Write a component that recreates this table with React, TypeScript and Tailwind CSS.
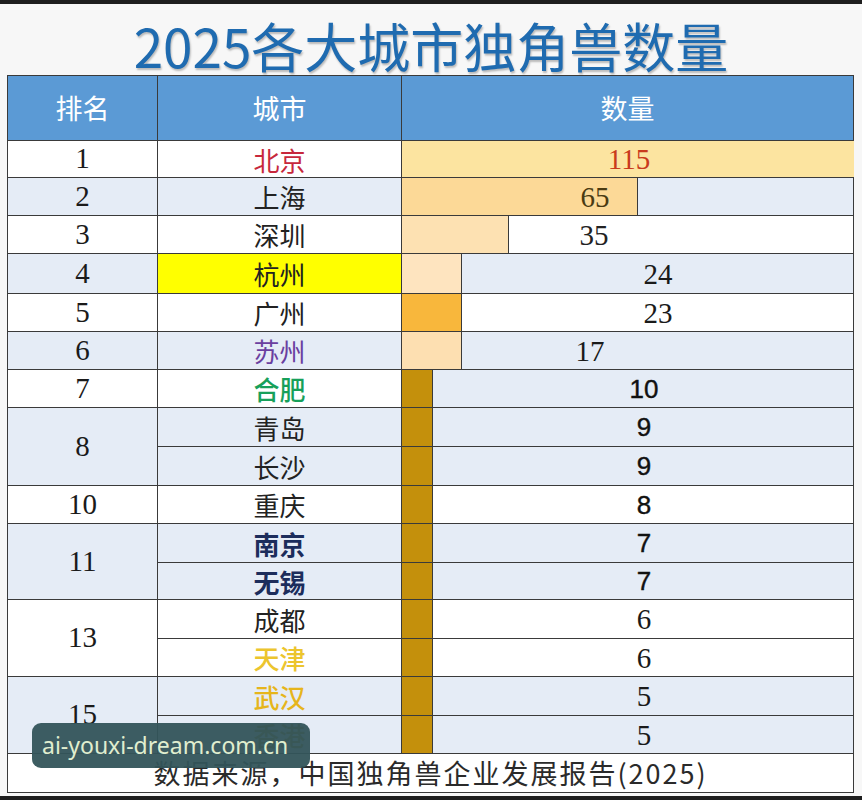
import type { ReactNode } from 'react';

type Row = {
  rank?: string;
  rankSpan?: 1 | 2;
  rankBg?: string;
  city: string;
  cityClass: string;
  cityBg: string;
  value: number;
  valueClass: string;
  valueBg: string;
  bar: string;
  barW: number;
  textX: number;
  h: number;
};

const W = 'bg-white';
const B = 'bg-[#e5ecf6]';
const serif = "font-['Liberation_Serif',serif] text-[29px]";
const sans = "font-['Liberation_Sans',sans-serif] text-[26px] [-webkit-text-stroke:0.4px_#111]";

const rows: Row[] = [
  { rank: '1', rankBg: W, city: '北京', cityClass: 'text-[#c7283c]', cityBg: W, value: 115, valueClass: `${serif} text-[#c93a1c]`, valueBg: W, bar: 'bg-[#fce4a0]', barW: 452, textX: 227, h: 37 },
  { rank: '2', rankBg: B, city: '上海', cityClass: 'text-[#222]', cityBg: B, value: 65, valueClass: `${serif} text-[#4a3b12]`, valueBg: B, bar: 'bg-[#fcd997]', barW: 236, textX: 193, h: 38 },
  { rank: '3', rankBg: W, city: '深圳', cityClass: 'text-[#222]', cityBg: W, value: 35, valueClass: `${serif} text-[#222]`, valueBg: W, bar: 'bg-[#fde1b2]', barW: 107, textX: 192, h: 38 },
  { rank: '4', rankBg: B, city: '杭州', cityClass: 'text-[#222]', cityBg: 'bg-[#ffff00]', value: 24, valueClass: `${serif} text-[#1a1a1a]`, valueBg: B, bar: 'bg-[#fee4bf]', barW: 60, textX: 256, h: 40 },
  { rank: '5', rankBg: W, city: '广州', cityClass: 'text-[#222]', cityBg: W, value: 23, valueClass: `${serif} text-[#1a1a1a]`, valueBg: W, bar: 'bg-[#f8b73c]', barW: 60, textX: 256, h: 38 },
  { rank: '6', rankBg: B, city: '苏州', cityClass: 'text-[#6a3fa0]', cityBg: B, value: 17, valueClass: `${serif} text-[#1a1a1a]`, valueBg: B, bar: 'bg-[#fddfb1]', barW: 60, textX: 188, h: 38 },
  { rank: '7', rankBg: W, city: '合肥', cityClass: 'text-[#17a05a] font-medium', cityBg: W, value: 10, valueClass: `${sans} text-[#111]`, valueBg: B, bar: 'bg-[#c4900c]', barW: 31, textX: 242, h: 38 },
  { rank: '8', rankSpan: 2, rankBg: B, city: '青岛', cityClass: 'text-[#222]', cityBg: B, value: 9, valueClass: `${sans} text-[#111]`, valueBg: B, bar: 'bg-[#c4900c]', barW: 31, textX: 242, h: 39 },
  { city: '长沙', cityClass: 'text-[#222]', cityBg: B, value: 9, valueClass: `${sans} text-[#111]`, valueBg: B, bar: 'bg-[#c4900c]', barW: 31, textX: 242, h: 39 },
  { rank: '10', rankBg: W, city: '重庆', cityClass: 'text-[#222]', cityBg: W, value: 8, valueClass: `${sans} text-[#111]`, valueBg: W, bar: 'bg-[#c4900c]', barW: 31, textX: 242, h: 38 },
  { rank: '11', rankSpan: 2, rankBg: B, city: '南京', cityClass: 'text-[#1c2d5c] font-bold', cityBg: B, value: 7, valueClass: `${sans} text-[#111]`, valueBg: B, bar: 'bg-[#c4900c]', barW: 31, textX: 242, h: 39 },
  { city: '无锡', cityClass: 'text-[#1c2d5c] font-bold', cityBg: B, value: 7, valueClass: `${sans} text-[#111]`, valueBg: B, bar: 'bg-[#c4900c]', barW: 31, textX: 242, h: 37 },
  { rank: '13', rankSpan: 2, rankBg: W, city: '成都', cityClass: 'text-[#222]', cityBg: W, value: 6, valueClass: `${serif} text-[#1a1a1a]`, valueBg: W, bar: 'bg-[#c4900c]', barW: 31, textX: 242, h: 39 },
  { city: '天津', cityClass: 'text-[#ecc52e] font-medium', cityBg: W, value: 6, valueClass: `${serif} text-[#1a1a1a]`, valueBg: W, bar: 'bg-[#c4900c]', barW: 31, textX: 242, h: 38 },
  { rank: '15', rankSpan: 2, rankBg: B, city: '武汉', cityClass: 'text-[#e6b51c] font-medium', cityBg: B, value: 5, valueClass: `${serif} text-[#1a1a1a]`, valueBg: B, bar: 'bg-[#c4900c]', barW: 31, textX: 242, h: 39 },
  { city: '香港', cityClass: 'text-[#a88a1a] font-medium', cityBg: B, value: 5, valueClass: `${serif} text-[#1a1a1a]`, valueBg: B, bar: 'bg-[#c4900c]', barW: 31, textX: 242, h: 38 },
];

const line = 'border-r border-b border-[#3a3a3a]';

function Cell({ className, children }: { className?: string; children?: ReactNode }) {
  return <div className={`flex items-center justify-center ${line} ${className ?? ''}`}>{children}</div>;
}

export default function App() {
  const template = `65px ${rows.map((r) => `${r.h}px`).join(' ')} 39px`;
  return (
    <div className="relative flex h-[800px] w-[862px] flex-col overflow-hidden bg-[#f7f7f7] font-['Noto_Sans_CJK_SC',sans-serif]">
      <div className="h-[4px] shrink-0 bg-[#1e1e1e]" />
      <h1 className="flex h-[71px] shrink-0 items-center justify-center pt-[12px] text-[53px] font-normal leading-none text-[#1f6bb0] [text-shadow:1px_2px_2px_rgba(0,0,0,0.25)]">
        2025各大城市独角兽数量
      </h1>

      <div
        className="ml-[7px] grid w-[847px] grid-cols-[150px_244px_452px] border-l border-t border-[#3a3a3a]"
        style={{ gridTemplateRows: template }}
      >
        <Cell className="bg-[#5b9ad5] text-[27px] text-white">排名</Cell>
        <Cell className="bg-[#5b9ad5] text-[27px] text-white">城市</Cell>
        <Cell className="bg-[#5b9ad5] text-[27px] text-white">数量</Cell>

        {rows.map((r, i) => (
          <div key={i} className="contents">
            {r.rank ? (
              <Cell className={`${r.rankBg} ${serif} text-[#1a1a1a] ${r.rankSpan === 2 ? 'row-span-2' : ''}`}>
                {r.rank}
              </Cell>
            ) : null}
            <Cell className={`${r.cityBg} text-[26px] ${r.cityClass}`}>{r.city}</Cell>
            <div className={`relative ${line} ${r.valueBg}`}>
              <div
                className={`absolute inset-y-0 left-0 ${r.bar} ${r.barW < 452 ? 'border-r border-[#3a3a3a]' : ''}`}
                style={{ width: r.barW }}
              />
              <span
                className={`absolute top-1/2 -translate-x-1/2 -translate-y-1/2 leading-none ${r.valueClass}`}
                style={{ left: r.textX }}
              >
                {r.value}
              </span>
            </div>
          </div>
        ))}

        <Cell className="col-span-3 bg-white text-[27px] tracking-[2px] text-[#2a2a2a]">
          数据来源，中国独角兽企业发展报告(2025)
        </Cell>
      </div>

      <div className="mt-auto h-[4px] shrink-0 bg-[#1e1e1e]" />

      <div className="absolute left-[32px] top-[723px] flex h-[45px] w-[278px] items-center rounded-[9px] bg-[#33545a]/95 pl-[10px] font-['Noto_Sans',sans-serif] text-[23px] text-[#e0eecf]">
        ai-youxi-dream.com.cn
      </div>
    </div>
  );
}
